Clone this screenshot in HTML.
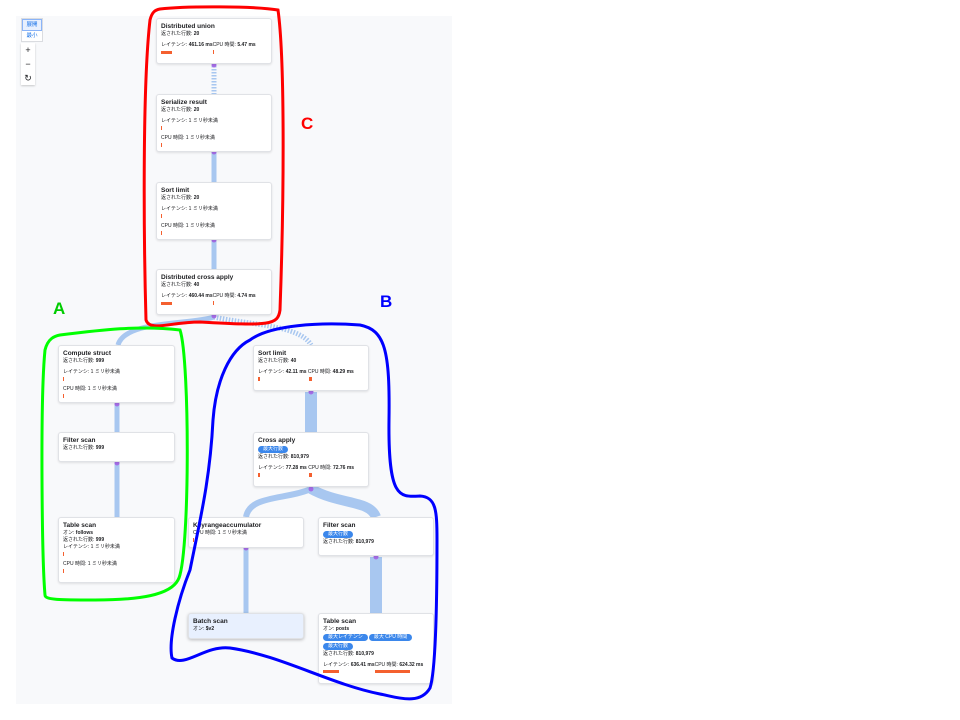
<!DOCTYPE html><html><head><meta charset="utf-8"><style>
body{margin:0;width:960px;height:720px;background:#fff;position:relative;overflow:hidden;font-family:"Liberation Sans","Noto Sans CJK JP",sans-serif;color:#202124}
#bg{position:absolute;left:16px;top:16px;width:436px;height:688px;background:#f8f9fb}
.c{position:absolute;background:#fff;border:1px solid #e0e2e6;border-radius:3px;box-shadow:0 1px 2px rgba(0,0,0,.1);padding:3px 4px;box-sizing:border-box;font-size:5px;line-height:7px}
.c b.t{display:block;font-size:6.5px;line-height:9px;font-weight:bold}
.bar{display:block;height:3px;background:#f4602f;margin:1px 0 2px}
.tk{display:inline-block;width:1px;height:4px;background:#f4602f;margin:1px 0 2px}
.p{display:inline-block;background:#1a73e8;color:#fff;border-radius:5px;padding:0 5px;font-size:5px;line-height:7px;margin:1px 1px 1px 0;opacity:.85}
.sp{height:4px}
svg{position:absolute;left:0;top:0}
.lt{position:absolute;font-weight:bold;font-size:17px}
</style></head><body>
<div id="bg"></div>
<div style="position:absolute;left:21px;top:18px;width:20px;height:22px;background:#fff;border:1px solid #dadce0;font-size:5.5px;text-align:center;line-height:10px;color:#1a73e8"><div style="background:#e8f0fe;border:1px solid #8ab4f8">展開</div>最小</div>
<div style="position:absolute;left:21px;top:43px;width:14px;height:42px;background:#fff;box-shadow:0 1px 2px rgba(0,0,0,.2);font-size:9px;text-align:center;line-height:14px">+<br>−<br>↻</div>
<svg width="960" height="720">
<g stroke="#a8c7f0" fill="none">
<path d="M214 66V94" stroke-width="5" stroke-dasharray="1.5 1.5"/>
<path d="M214 152V182" stroke-width="5"/>
<path d="M214 240V269" stroke-width="5"/>
<path d="M214 317C190 325 125 320 118 345" stroke-width="5"/>
<path d="M214 317C250 325 300 325 311 345" stroke-width="5" stroke-dasharray="1.5 1.5"/>
<path d="M117 404V432M117 463V517" stroke-width="5"/>
<path d="M311 392V432" stroke-width="12"/>
<path d="M311 489C285 500 250 495 246 517" stroke-width="6"/>
<path d="M311 489C340 505 370 500 376 517" stroke-width="10"/>
<path d="M246 548V613" stroke-width="5"/>
<path d="M376 557V613" stroke-width="12"/>
</g>
<g fill="#a66ee8">
<circle cx="214" cy="65" r="2.5"/><circle cx="214" cy="152" r="2.5"/><circle cx="214" cy="240" r="2.5"/><circle cx="214" cy="316" r="2.5"/><circle cx="117" cy="404" r="2.5"/><circle cx="117" cy="463" r="2.5"/><circle cx="311" cy="392" r="2.5"/><circle cx="311" cy="489" r="2.5"/><circle cx="246" cy="548" r="2.5"/><circle cx="376" cy="557" r="2.5"/>
</g>
</svg>
<div class="c" style="left:156px;top:18px;width:116px;height:46px"><b class="t">Distributed union</b>返された行数: <b>20</b><div class="sp"></div>レイテンシ: <b>461.16 ms</b>CPU 時間: <b>5.47 ms</b><div><span class="bar" style="display:inline-block;width:11px"></span><span class="tk" style="margin-left:41px"></span></div></div>
<div class="c" style="left:156px;top:94px;width:116px;height:58px"><b class="t">Serialize result</b>返された行数: <b>20</b><div class="sp"></div>レイテンシ: 1 ミリ秒未満<br><span class="tk"></span><br>CPU 時間: 1 ミリ秒未満<br><span class="tk"></span></div>
<div class="c" style="left:156px;top:182px;width:116px;height:58px"><b class="t">Sort limit</b>返された行数: <b>20</b><div class="sp"></div>レイテンシ: 1 ミリ秒未満<br><span class="tk"></span><br>CPU 時間: 1 ミリ秒未満<br><span class="tk"></span></div>
<div class="c" style="left:156px;top:269px;width:116px;height:46px"><b class="t">Distributed cross apply</b>返された行数: <b>40</b><div class="sp"></div>レイテンシ: <b>460.44 ms</b>CPU 時間: <b>4.74 ms</b><div><span class="bar" style="display:inline-block;width:11px"></span><span class="tk" style="margin-left:41px"></span></div></div>
<div class="c" style="left:58px;top:345px;width:117px;height:58px"><b class="t">Compute struct</b>返された行数: <b>999</b><div class="sp"></div>レイテンシ: 1 ミリ秒未満<br><span class="tk"></span><br>CPU 時間: 1 ミリ秒未満<br><span class="tk"></span></div>
<div class="c" style="left:58px;top:432px;width:117px;height:30px"><b class="t">Filter scan</b>返された行数: <b>999</b></div>
<div class="c" style="left:58px;top:517px;width:117px;height:66px"><b class="t">Table scan</b>オン: <b>follows</b><br>返された行数: <b>999</b><br>レイテンシ: 1 ミリ秒未満<br><span class="tk"></span><br>CPU 時間: 1 ミリ秒未満<br><span class="tk"></span></div>
<div class="c" style="left:253px;top:345px;width:116px;height:46px"><b class="t">Sort limit</b>返された行数: <b>40</b><div class="sp"></div>レイテンシ: <b>42.11 ms</b> CPU 時間: <b>48.29 ms</b><div><span class="tk" style="width:2px"></span><span class="tk" style="width:3px;margin-left:49px"></span></div></div>
<div class="c" style="left:253px;top:432px;width:116px;height:55px"><b class="t">Cross apply</b><span class="p">最大行数</span><br>返された行数: <b>810,979</b><div class="sp"></div>レイテンシ: <b>77.28 ms</b> CPU 時間: <b>72.76 ms</b><div><span class="tk" style="width:2px"></span><span class="tk" style="width:3px;margin-left:49px"></span></div></div>
<div class="c" style="left:188px;top:517px;width:116px;height:31px"><b class="t">Keyrangeaccumulator</b>CPU 時間: 1 ミリ秒未満<br><span class="tk"></span></div>
<div class="c" style="left:318px;top:517px;width:116px;height:39px"><b class="t">Filter scan</b><span class="p">最大行数</span><br>返された行数: <b>810,979</b></div>
<div class="c" style="left:188px;top:613px;width:116px;height:26px;background:#e8f0fe;box-shadow:0 1px 3px rgba(0,0,0,.25)"><b class="t">Batch scan</b>オン: <b>$v2</b></div>
<div class="c" style="left:318px;top:613px;width:116px;height:71px"><b class="t">Table scan</b>オン: <b>posts</b><br><span class="p">最大レイテンシ</span><span class="p">最大 CPU 時間</span><br><span class="p">最大行数</span><br>返された行数: <b>810,979</b><div class="sp"></div>レイテンシ: <b>636.41 ms</b>CPU 時間: <b>624.32 ms</b><div><span class="bar" style="display:inline-block;width:16px"></span><span class="bar" style="display:inline-block;width:35px;margin-left:36px"></span></div></div>
<svg width="960" height="720">
<path d="M160 9C185 6 255 6 278 10C285 60 284 200 280 310C278 325 270 326 200 322C170 322 150 332 146 320C144 250 142 90 150 20C152 12 155 10 160 9Z" fill="none" stroke="#f00" stroke-width="3"/>
<path d="M60 335C100 330 140 325 180 330C190 360 190 560 178 580C170 595 140 600 95 600C60 600 45 600 45 595C42 560 40 400 45 350C48 338 55 336 60 335Z" fill="none" stroke="#0f0" stroke-width="3"/>
<path d="M250 340C270 325 320 322 360 325C385 330 390 350 389 420C388 500 400 497 420 496C436 497 437 510 437 540C437 600 436 670 430 688C420 705 400 698 380 694C330 684 280 655 230 648C205 645 185 668 172 658C168 640 178 600 190 570C200 520 210 480 213 420C216 380 230 350 250 340Z" fill="none" stroke="#00f" stroke-width="3"/>
</svg>
<div class="lt" style="left:301px;top:114px;color:#f00">C</div>
<div class="lt" style="left:53px;top:299px;color:#0c0">A</div>
<div class="lt" style="left:380px;top:292px;color:#00f">B</div>
</body></html>
